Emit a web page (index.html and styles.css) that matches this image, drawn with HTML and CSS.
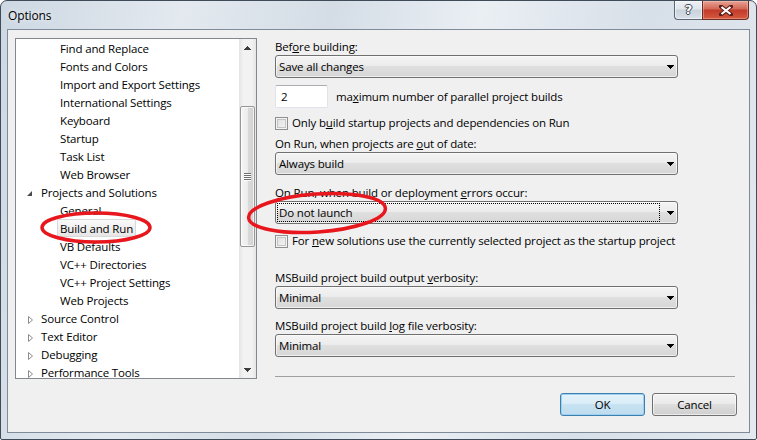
FILE: index.html
```html
<!DOCTYPE html>
<html>
<head>
<meta charset="utf-8">
<title>Options</title>
<link rel="stylesheet" href="styles.css">
</head>
<body>
<div class="window">
  <div class="titlebar">
    <span class="title">Options</span>
    <div class="caption">
      <div class="cbtn help"><span class="qmark">?</span></div>
      <div class="cbtn close">
        <svg width="14" height="11" viewBox="0 0 14 11"><path d="M2 1.5 L12 9.5 M12 1.5 L2 9.5" stroke="#5a1d18" stroke-width="4" stroke-linecap="square" fill="none"/><path d="M2.5 2 L11.5 9 M11.5 2 L2.5 9" stroke="#fff" stroke-width="2.2" fill="none"/></svg>
      </div>
    </div>
  </div>
  <div class="client">
    <div class="main">
      <div class="tree">
        <div class="items">
          <div class="row l2"><span class="lbl">Find and Replace</span></div>
          <div class="row l2"><span class="lbl">Fonts and Colors</span></div>
          <div class="row l2"><span class="lbl">Import and Export Settings</span></div>
          <div class="row l2"><span class="lbl">International Settings</span></div>
          <div class="row l2"><span class="lbl">Keyboard</span></div>
          <div class="row l2"><span class="lbl">Startup</span></div>
          <div class="row l2"><span class="lbl">Task List</span></div>
          <div class="row l2"><span class="lbl">Web Browser</span></div>
          <div class="row l1"><svg class="exp" width="16" height="18" viewBox="0 0 16 18"><path d="M10 8 L10 13 L5 13 Z" fill="#4a4a4a"/></svg><span class="lbl">Projects and Solutions</span></div>
          <div class="row l2"><span class="lbl">General</span></div>
          <div class="row l2"><span class="lbl sel">Build and Run</span></div>
          <div class="row l2"><span class="lbl">VB Defaults</span></div>
          <div class="row l2"><span class="lbl">VC++ Directories</span></div>
          <div class="row l2"><span class="lbl">VC++ Project Settings</span></div>
          <div class="row l2"><span class="lbl">Web Projects</span></div>
          <div class="row l1"><svg class="exp" width="16" height="18" viewBox="0 0 16 18"><path d="M6.5 7.5 L10.5 11 L6.5 14.5 Z" fill="none" stroke="#8c8c8c"/></svg><span class="lbl">Source Control</span></div>
          <div class="row l1"><svg class="exp" width="16" height="18" viewBox="0 0 16 18"><path d="M6.5 7.5 L10.5 11 L6.5 14.5 Z" fill="none" stroke="#8c8c8c"/></svg><span class="lbl">Text Editor</span></div>
          <div class="row l1"><svg class="exp" width="16" height="18" viewBox="0 0 16 18"><path d="M6.5 7.5 L10.5 11 L6.5 14.5 Z" fill="none" stroke="#8c8c8c"/></svg><span class="lbl">Debugging</span></div>
          <div class="row l1"><svg class="exp" width="16" height="18" viewBox="0 0 16 18"><path d="M6.5 7.5 L10.5 11 L6.5 14.5 Z" fill="none" stroke="#8c8c8c"/></svg><span class="lbl">Performance Tools</span></div>
        </div>
        <div class="vscroll">
          <div class="sbtn"><svg width="7" height="4" viewBox="0 0 7 4" shape-rendering="crispEdges"><path d="M3 0h1v1h1v1h1v1h1v1h-7v-1h1v-1h1v-1h1z" fill="#3c3c3c"/></svg></div>
          <div class="track">
            <div class="thumb">
              <svg width="7" height="8" viewBox="0 0 7 8" shape-rendering="crispEdges"><path d="M0 0h7v1h-7zM0 2h7v1h-7zM0 4h7v1h-7zM0 6h7v1h-7z" fill="#6e6e6e"/><path d="M0 1h7v1h-7zM0 3h7v1h-7zM0 5h7v1h-7zM0 7h7v1h-7z" fill="#fdfdfd"/></svg>
            </div>
          </div>
          <div class="sbtn"><svg width="7" height="4" viewBox="0 0 7 4" shape-rendering="crispEdges"><path d="M0 0h7v1h-1v1h-1v1h-1v1h-1v-1h-1v-1h-1v-1h-1z" fill="#3c3c3c"/></svg></div>
        </div>
      </div>
      <div class="panel">
        <div class="label l-before">Bef<u>o</u>re building:</div>
        <div class="dd"><span class="val">Save all changes</span><svg class="arrow" width="7" height="4" viewBox="0 0 7 4" shape-rendering="crispEdges"><path d="M0 0h7v1h-1v1h-1v1h-1v1h-1v-1h-1v-1h-1v-1h-1z" fill="#000"/></svg></div>
        <div class="numrow">
          <div class="textbox">2</div>
          <span class="numlabel">ma<u>x</u>imum number of parallel project builds</span>
        </div>
        <div class="check c1"><span class="box"></span><span>Only b<u>u</u>ild startup projects and dependencies on Run</span></div>
        <div class="label l-ood">On Run, when projects are <u>o</u>ut of date:</div>
        <div class="dd"><span class="val">Always build</span><svg class="arrow" width="7" height="4" viewBox="0 0 7 4" shape-rendering="crispEdges"><path d="M0 0h7v1h-1v1h-1v1h-1v1h-1v-1h-1v-1h-1v-1h-1z" fill="#000"/></svg></div>
        <div class="label l-err">On Run, when build or deployment <u>e</u>rrors occur:</div>
        <div class="dd"><span class="val focus">Do not launch</span><svg class="arrow" width="7" height="4" viewBox="0 0 7 4" shape-rendering="crispEdges"><path d="M0 0h7v1h-1v1h-1v1h-1v1h-1v-1h-1v-1h-1v-1h-1z" fill="#000"/></svg></div>
        <div class="check c2"><span class="box"></span><span>For <u>n</u>ew solutions use the currently selected project as the startup project</span></div>
        <div class="label l-out">MSBuild project build output <u>v</u>erbosity:</div>
        <div class="dd"><span class="val">Minimal</span><svg class="arrow" width="7" height="4" viewBox="0 0 7 4" shape-rendering="crispEdges"><path d="M0 0h7v1h-1v1h-1v1h-1v1h-1v-1h-1v-1h-1v-1h-1z" fill="#000"/></svg></div>
        <div class="label l-log">MSBuild project build <u>l</u>og file verbosity:</div>
        <div class="dd"><span class="val">Minimal</span><svg class="arrow" width="7" height="4" viewBox="0 0 7 4" shape-rendering="crispEdges"><path d="M0 0h7v1h-1v1h-1v1h-1v1h-1v-1h-1v-1h-1v-1h-1z" fill="#000"/></svg></div>
        <div class="sep"></div>
      </div>
    </div>
    <div class="footer">
      <button class="btn default">OK</button>
      <button class="btn">Cancel</button>
    </div>
  </div>
  <svg class="marks" width="757" height="440" viewBox="0 0 757 440">
    <ellipse cx="96" cy="227.5" rx="54" ry="14.5" fill="none" stroke="#e8161d" stroke-width="3.5"/>
    <ellipse cx="317" cy="213" rx="68.5" ry="19" transform="rotate(-4 317 213)" fill="none" stroke="#e8161d" stroke-width="3.5"/>
  </svg>
</div>
</body>
</html>
```

FILE: styles.css
```css
* { box-sizing: border-box; margin: 0; padding: 0; }
html, body { width: 757px; height: 440px; overflow: hidden; background: #ffffff; }
body {
  font-family: "Open Sans", "Noto Sans", "DejaVu Sans", sans-serif;
  font-size: 11.5px;
  letter-spacing: -0.15px;
  color: #000;
}
u { text-decoration: underline; text-underline-offset: 1px; }

.window {
  position: relative;
  width: 757px;
  height: 440px;
  border: 1px solid #3f4b58;
  border-radius: 7px 7px 2px 2px;
  background: linear-gradient(100deg, #cdd8e3 0%, #e3e9ef 22%, #d4dde6 40%, #eaeff4 58%, #d7dfe8 78%, #e4e9ef 100%);
  display: flex;
  flex-direction: column;
  overflow: hidden;
}

.titlebar {
  height: 28px;
  display: flex;
  justify-content: space-between;
  align-items: flex-start;
  padding: 0 7px 0 7px;
}
.title {
  line-height: 29px;
  font-size: 12px;
  color: #000;
  text-shadow: 0 0 6px rgba(255, 255, 255, 0.9);
}
.caption { display: flex; }
.cbtn {
  height: 19px;
  display: flex;
  align-items: center;
  justify-content: center;
  border: 1px solid #5b6673;
  border-top: none;
}
.help {
  width: 28px;
  border-right: none;
  border-radius: 0 0 0 4px;
  background: linear-gradient(#eef1f5 0%, #dfe5ec 45%, #c9d2dc 50%, #d9e0e8 100%);
  box-shadow: inset 0 0 0 1px rgba(255, 255, 255, 0.55);
}
.qmark {
  font-family: "DejaVu Sans", sans-serif;
  font-weight: bold;
  font-size: 13px;
  letter-spacing: 0;
  line-height: 16px;
  color: #fff;
  text-shadow: 1px 0 0 #3c4652, -1px 0 0 #3c4652, 0 1px 0 #3c4652, 0 -1px 0 #3c4652;
}
.close {
  width: 47px;
  border-color: #6b2c25;
  border-radius: 0 0 4px 0;
  background: linear-gradient(#e8a395 0%, #d46a59 42%, #c23b2b 52%, #d65a3e 100%);
  box-shadow: inset 0 0 0 1px rgba(255, 220, 210, 0.35);
}

.client {
  margin: 0 6px;
  height: 404px;
  border: 1px solid #7f8b98;
  background: #f0f0f0;
  padding: 8px 12px 0 7px;
  display: flex;
  flex-direction: column;
}

.main { display: flex; height: 341px; }

.tree {
  width: 242px;
  height: 341px;
  border: 1px solid #828790;
  background: #fff;
  display: flex;
}
.items { flex: 1; overflow: hidden; padding-top: 1px; }
.row {
  height: 18px;
  display: flex;
  align-items: flex-start;
  white-space: nowrap;
}
.row.l2 { padding-left: 41px; }
.row.l1 { padding-left: 6px; }
.exp { flex: none; margin-top: -1px; }
.lbl {
  display: inline-block;
  height: 18px;
  line-height: 16px;
  padding: 0 2px;
  border: 1px solid transparent;
}
.lbl.sel {
  border-color: #d9d9d9;
  border-radius: 2px;
  background: linear-gradient(#fafafa, #e6e6e6);
  margin-top: -1px;
  line-height: 17px;
}

.vscroll {
  width: 17px;
  display: flex;
  flex-direction: column;
  background: linear-gradient(to right, #e3e3e3 0%, #f2f2f2 25%, #f2f2f2 75%, #e6e6e6 100%);
}
.sbtn {
  height: 17px;
  display: flex;
  align-items: center;
  justify-content: center;
}
.track { flex: 1; padding: 50px 1px 0 1px; }
.thumb {
  height: 141px;
  border: 1px solid #979797;
  border-radius: 2px;
  background: linear-gradient(to right, #f5f5f5 0%, #ececec 50%, #dadada 51%, #d2d2d2 100%);
  box-shadow: inset 0 0 0 1px rgba(255, 255, 255, 0.7);
  display: flex;
  align-items: center;
  justify-content: center;
}

.panel {
  width: 461px;
  margin-left: 18px;
  display: flex;
  flex-direction: column;
  align-items: flex-start;
}
.label { line-height: 16px; height: 16px; white-space: nowrap; }
.l-before { margin-top: 1px; }
.l-ood { margin-top: 5px; }
.l-err { margin-top: 10px; }
.l-out { margin-top: 21px; }
.l-log { margin-top: 9px; }

.dd {
  width: 403px;
  height: 23px;
  border: 1px solid #707070;
  border-radius: 3px;
  background: linear-gradient(#f4f4f4 0%, #ececec 45%, #dfdfdf 50%, #d6d6d6 100%);
  box-shadow: inset 0 0 0 1px rgba(255, 255, 255, 0.6);
  display: flex;
  align-items: center;
}
.dd .val {
  flex: 1;
  padding-left: 3px;
  line-height: 21px;
  white-space: nowrap;
}
.dd .val.focus {
  margin: 1px 7px 1px 1px;
  border: 1px dotted #000;
  padding-left: 1px;
  line-height: 17px;
}
.dd .arrow { flex: none; margin-right: 3px; }

.numrow {
  margin-top: 7px;
  display: flex;
  align-items: center;
}
.textbox {
  width: 53px;
  height: 23px;
  background: #fff;
  border: 1px solid #e2e3ea;
  border-top-color: #abadb3;
  border-radius: 2px;
  padding-left: 5px;
  line-height: 21px;
}
.numlabel { margin-left: 8px; line-height: 16px; }

.check {
  height: 16px;
  display: flex;
  align-items: center;
  line-height: 16px;
  white-space: nowrap;
}
.c1 { margin-top: 7px; }
.c2 { margin-top: 9px; }
.box {
  width: 13px;
  height: 13px;
  margin-right: 4px;
  border: 1px solid #8e8f8f;
  background: linear-gradient(135deg, #dcdcdc, #f7f7f7);
  box-shadow: inset 0 0 0 1px #f4f4f4, inset 0 0 0 2px #c4c4c4;
}

.sep {
  margin-top: 19px;
  width: 460px;
  height: 1px;
  background: #a0a0a0;
}

.footer {
  margin-top: 14px;
  display: flex;
  justify-content: flex-end;
  gap: 7px;
}
.btn {
  width: 85px;
  height: 23px;
  border: 1px solid #707070;
  border-radius: 3px;
  font-family: inherit;
  font-size: 11.5px;
  letter-spacing: -0.15px;
  color: #000;
  background: linear-gradient(#f2f2f2 0%, #ebebeb 45%, #dddddd 50%, #cfcfcf 100%);
  box-shadow: inset 0 0 0 1px rgba(255, 255, 255, 0.6);
}
.btn.default {
  border-color: #3c7fb1;
  background: linear-gradient(#e6f3fa 0%, #d9edf8 45%, #c7e3f3 50%, #bddcee 100%);
  box-shadow: inset 0 0 0 1px #9fd0ee;
}

.marks {
  position: absolute;
  left: -1px;
  top: -1px;
  pointer-events: none;
}
```
